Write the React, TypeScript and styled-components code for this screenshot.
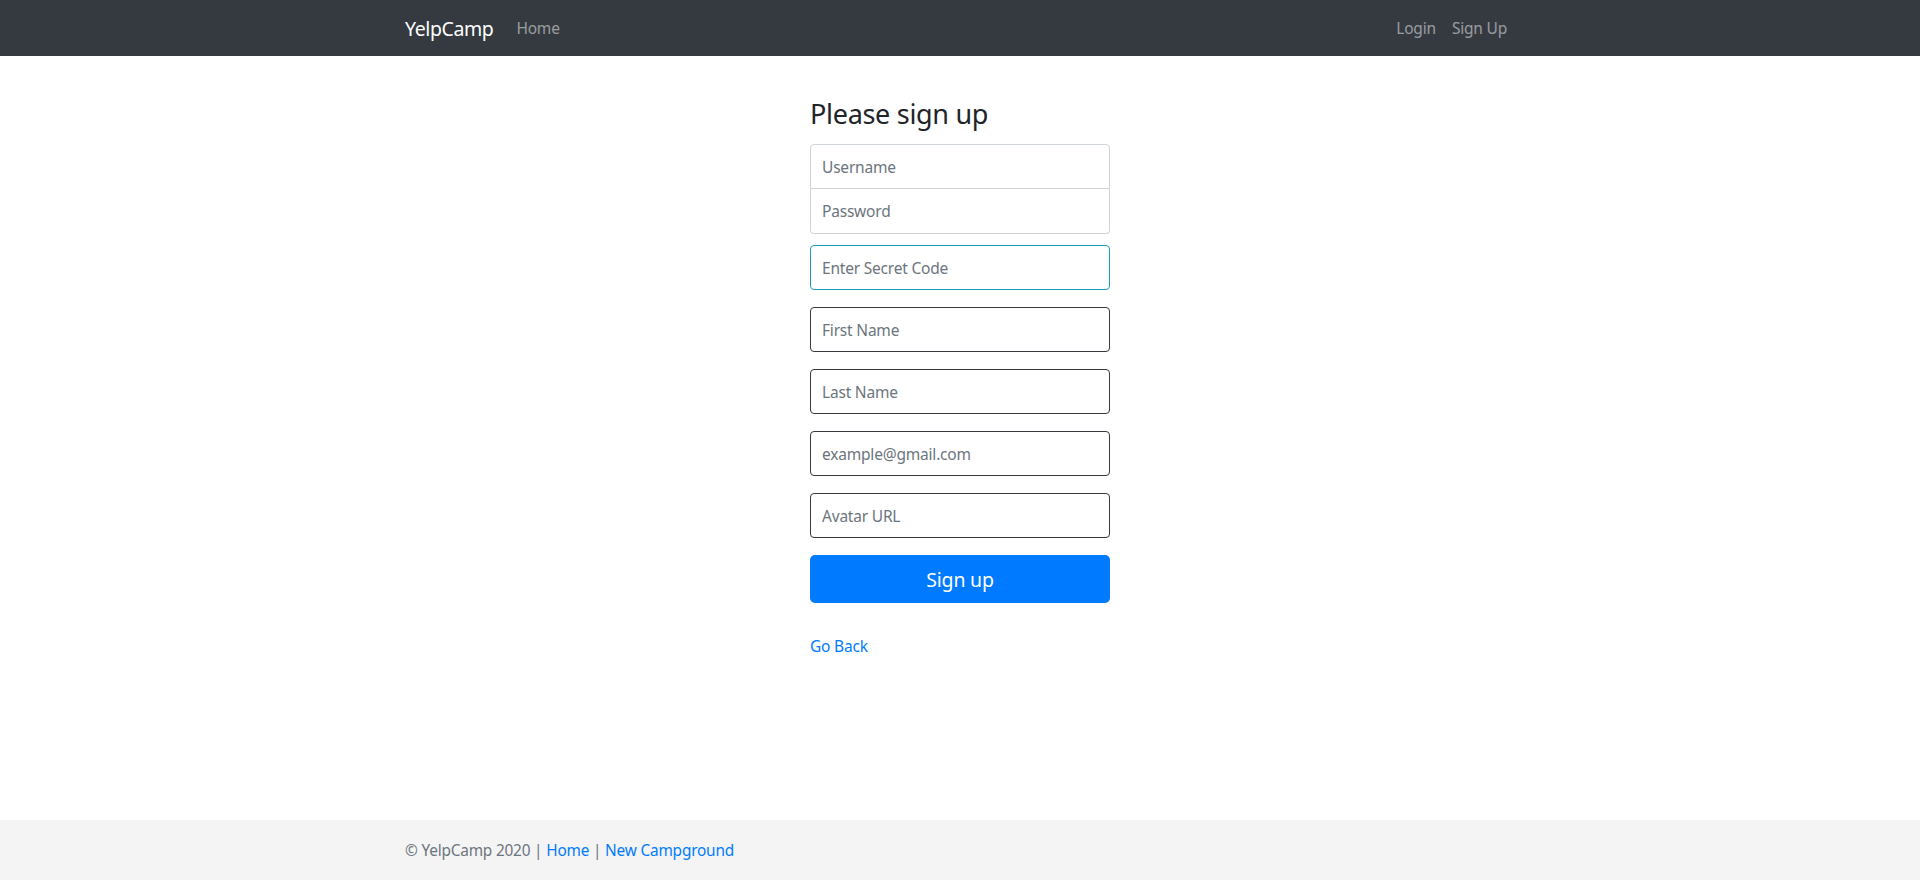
import React from "react";
import styled, { createGlobalStyle } from "styled-components";

const Global = createGlobalStyle`
  html, body { margin: 0; padding: 0; }
  body {
    font-family: "Noto Sans", "Open Sans", Arial, sans-serif;
    font-size: 16px;
    color: #212529;
    background: #fff;
  }
  * { box-sizing: border-box; }
`;

const Page = styled.div`
  min-height: 880px;
  display: flex;
  flex-direction: column;
`;

const NavBar = styled.nav`
  height: 56px;
  background: #343a40;
  display: flex;
  justify-content: center;
`;

const Container = styled.div`
  width: 1140px;
  padding: 0 15px;
  display: flex;
  align-items: center;
`;

const Brand = styled.a`
  color: #fff;
  font-size: 19.5px;
  margin-right: 15px;
  text-decoration: none;
  letter-spacing: -0.4px;
`;

const NavLinks = styled.div<{ $right?: boolean }>`
  display: flex;
  margin-left: ${(p) => (p.$right ? "auto" : "0")};
`;

const NavLink = styled.a`
  color: rgba(255, 255, 255, 0.5);
  padding: 8px;
  font-size: 15.5px;
  text-decoration: none;
  letter-spacing: -0.2px;
`;

const Main = styled.main`
  flex: 1;
  display: flex;
  justify-content: center;
  padding-top: 42px;
`;

const Form = styled.form`
  width: 300px;
  display: flex;
  flex-direction: column;
`;

const Title = styled.h3`
  margin: 0 0 14px 0;
  font-size: 27px;
  font-weight: 400;
  line-height: 1.2;
  letter-spacing: -0.3px;
`;

const Group = styled.div`
  display: flex;
  flex-direction: column;
  margin-bottom: 11px;
`;

const Input = styled.input<{ $tone?: "light" | "info" | "dark"; $pos?: "top" | "bottom" | "single" }>`
  height: 45px;
  width: 100%;
  padding: 0 11px;
  font-family: inherit;
  font-size: 15.5px;
  letter-spacing: -0.2px;
  color: #495057;
  background: #fff;
  outline: none;
  border: 1px solid
    ${(p) => (p.$tone === "info" ? "#17a2b8" : p.$tone === "dark" ? "#343a40" : "#ced4da")};
  border-top-width: ${(p) => (p.$pos === "bottom" ? "0" : "1px")};
  border-radius: ${(p) =>
    p.$pos === "top" ? "4px 4px 0 0" : p.$pos === "bottom" ? "0 0 4px 4px" : "4px"};
  &::placeholder { color: #6c757d; }
`;

const Field = styled.div`
  margin-bottom: 17px;
`;

const Button = styled.button`
  height: 48px;
  width: 100%;
  border: none;
  border-radius: 5px;
  background: #007bff;
  color: #fff;
  font-family: inherit;
  font-size: 19.5px;
  letter-spacing: -0.2px;
  cursor: pointer;
`;

const BackLink = styled.a`
  margin-top: 32px;
  color: #007bff;
  font-size: 15.5px;
  text-decoration: none;
  letter-spacing: -0.2px;
`;

const Footer = styled.footer`
  height: 60px;
  background: #f4f4f4;
  display: flex;
  justify-content: center;
`;

const FooterText = styled.span`
  color: #6c757d;
  font-size: 15.4px;
  letter-spacing: -0.2px;
`;

const FooterLink = styled.a`
  color: #007bff;
  text-decoration: none;
`;

export default function App() {
  return (
    <Page>
      <Global />
      <NavBar>
        <Container>
          <Brand href="#">YelpCamp</Brand>
          <NavLinks>
            <NavLink href="#">Home</NavLink>
          </NavLinks>
          <NavLinks $right>
            <NavLink href="#">Login</NavLink>
            <NavLink href="#">Sign Up</NavLink>
          </NavLinks>
        </Container>
      </NavBar>
      <Main>
        <Form onSubmit={(e) => e.preventDefault()}>
          <Title>Please sign up</Title>
          <Group>
            <Input $pos="top" placeholder="Username" />
            <Input $pos="bottom" type="password" placeholder="Password" />
          </Group>
          <Field>
            <Input $tone="info" placeholder="Enter Secret Code" />
          </Field>
          <Field>
            <Input $tone="dark" placeholder="First Name" />
          </Field>
          <Field>
            <Input $tone="dark" placeholder="Last Name" />
          </Field>
          <Field>
            <Input $tone="dark" placeholder="example@gmail.com" />
          </Field>
          <Field>
            <Input $tone="dark" placeholder="Avatar URL" />
          </Field>
          <Button type="submit">Sign up</Button>
          <BackLink href="#">Go Back</BackLink>
        </Form>
      </Main>
      <Footer>
        <Container>
          <FooterText>
            © YelpCamp 2020 | <FooterLink href="#">Home</FooterLink> |{" "}
            <FooterLink href="#">New Campground</FooterLink>
          </FooterText>
        </Container>
      </Footer>
    </Page>
  );
}
